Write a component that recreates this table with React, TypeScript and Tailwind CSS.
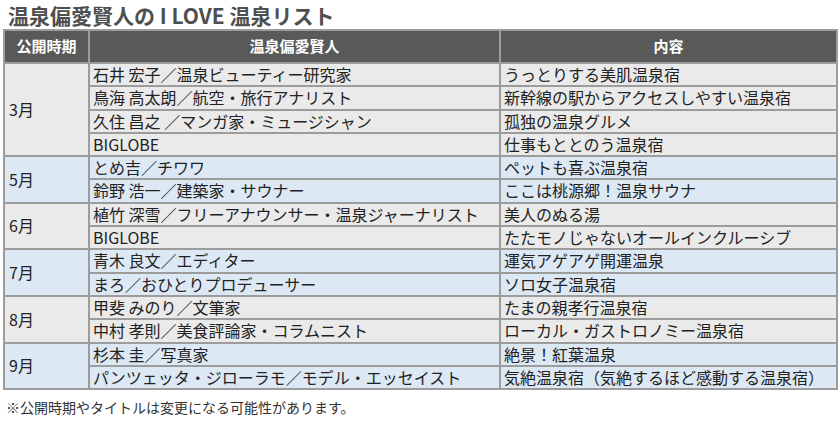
const groups = [
  {
    month: '3月',
    rows: [
      ['石井 宏子／温泉ビューティー研究家', 'うっとりする美肌温泉宿'],
      ['鳥海 高太朗／航空・旅行アナリスト', '新幹線の駅からアクセスしやすい温泉宿'],
      ['久住 昌之 ／マンガ家・ミュージシャン', '孤独の温泉グルメ'],
      ['BIGLOBE', '仕事もととのう温泉宿'],
    ],
  },
  {
    month: '5月',
    rows: [
      ['とめ吉／チワワ', 'ペットも喜ぶ温泉宿'],
      ['鈴野 浩一／建築家・サウナー', 'ここは桃源郷！温泉サウナ'],
    ],
  },
  {
    month: '6月',
    rows: [
      ['植竹 深雪／フリーアナウンサー・温泉ジャーナリスト', '美人のぬる湯'],
      ['BIGLOBE', 'たたモノじゃないオールインクルーシブ'],
    ],
  },
  {
    month: '7月',
    rows: [
      ['青木 良文／エディター', '運気アゲアゲ開運温泉'],
      ['まろ／おひとりプロデューサー', 'ソロ女子温泉宿'],
    ],
  },
  {
    month: '8月',
    rows: [
      ['甲斐 みのり／文筆家', 'たまの親孝行温泉宿'],
      ['中村 孝則／美食評論家・コラムニスト', 'ローカル・ガストロノミー温泉宿'],
    ],
  },
  {
    month: '9月',
    rows: [
      ['杉本 圭／写真家', '絶景！紅葉温泉'],
      ['パンツェッタ・ジローラモ／モデル・エッセイスト', '気絶温泉宿（気絶するほど感動する温泉宿）'],
    ],
  },
]

const cell = 'border-2 border-[#9c9c9c] px-[3px] py-0 h-[23.3px] leading-[21.3px] align-middle whitespace-nowrap'

const App = () => {
  return (
    <div
      className="w-[840px] h-[423px] bg-white text-[#222]"
      style={{ fontFamily: '"Noto Sans CJK JP", "Noto Sans", sans-serif' }}
    >
      <h1 className="pl-[8px] pt-[3px] h-[28px] text-[21px] leading-[24px] font-bold text-[#4f4f4f]">
        温泉偏愛賢人の I LOVE 温泉リスト
      </h1>

      <table className="ml-[3px] mt-[1px] w-[835px] border-collapse table-fixed text-[16px]">
        <colgroup>
          <col className="w-[85px]" />
          <col className="w-[411px]" />
          <col />
        </colgroup>
        <thead>
          <tr className="bg-[#595959] text-white">
            <th className="border-2 border-[#9c9c9c] h-[33px] text-[15px] font-bold">公開時期</th>
            <th className="border-2 border-[#9c9c9c] h-[33px] text-[15px] font-bold">温泉偏愛賢人</th>
            <th className="border-2 border-[#9c9c9c] h-[33px] text-[15px] font-bold">内容</th>
          </tr>
        </thead>
        <tbody>
          {groups.map((group, gi) => {
            const bg = gi % 2 === 0 ? 'bg-[#eaeaea]' : 'bg-[#dde8f5]'
            return group.rows.map((row, ri) => (
              <tr className={bg} key={group.month + ri}>
                {ri === 0 && (
                  <td className={cell + ' pl-[4px]'} rowSpan={group.rows.length}>
                    {group.month}
                  </td>
                )}
                <td className={cell}>{row[0]}</td>
                <td className={cell}>{row[1]}</td>
              </tr>
            ))
          })}
        </tbody>
      </table>

      <p className="pl-[6px] pt-[8px] text-[14px] leading-[18px] text-[#333]">
        ※公開時期やタイトルは変更になる可能性があります。
      </p>
    </div>
  )
}

export default App
